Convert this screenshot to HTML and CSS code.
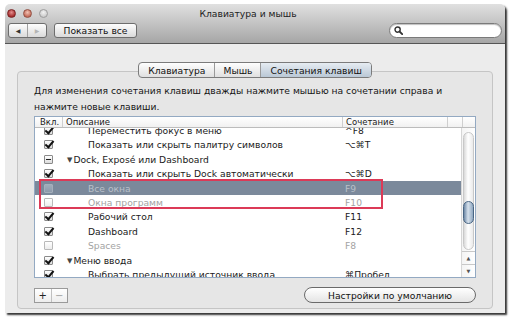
FILE: index.html
```html
<!DOCTYPE html>
<html lang="ru">

<head>
    <meta charset="UTF-8">
    <title>Клавиатура и мышь</title>
    <link rel="stylesheet" href="styles.css">
</head>

<body>
    <div class="window">
        <!-- Title bar + toolbar -->
        <div class="toolbar">
            <div class="titlebar">
                <div class="lights">
                    <span class="light close"></span>
                    <span class="light mini"></span>
                    <span class="light zoom"></span>
                </div>
                <div class="title">Клавиатура и мышь</div>
            </div>
            <div class="tools">
                <div class="nav">
                    <span class="nav-btn">&#9664;</span>
                    <span class="nav-btn off">&#9654;</span>
                </div>
                <span class="show-all">Показать все</span>
                <div class="search">
                    <svg width="9" height="9" viewBox="0 0 9 9">
                        <circle cx="3.6" cy="3.6" r="2.6" fill="none" stroke="#333" stroke-width="1.4" />
                        <line x1="5.5" y1="5.5" x2="8.2" y2="8.2" stroke="#333" stroke-width="1.8" stroke-linecap="round" />
                    </svg>
                </div>
            </div>
        </div>

        <!-- Pane content -->
        <div class="content">
            <div class="tabs">
                <span class="tab">Клавиатура</span>
                <span class="tab">Мышь</span>
                <span class="tab active">Сочетания клавиш</span>
            </div>
            <div class="tabbox">
                <p class="hint">Для изменения сочетания клавиш дважды нажмите мышью на сочетании справа и нажмите новые клавиши.</p>

                <div class="table">
                    <div class="list-head">
                        <span class="hc first">Вкл.</span>
                        <span class="hc">Описание</span>
                        <span class="hc">Сочетание</span>
                        <span class="hc"></span>
                        <span class="hc last"></span>
                    </div>
                    <div class="list-body">
                        <div class="rows">
                            <div class="row">
                                <span class="cell-check"><span class="cb on"></span></span>
                                <span class="desc child">Переместить фокус в меню</span>
                                <span class="keys">^F8</span>
                            </div>
                            <div class="row">
                                <span class="cell-check"><span class="cb on"></span></span>
                                <span class="desc child">Показать или скрыть палитру символов</span>
                                <span class="keys">&#8997;&#8984;T</span>
                            </div>
                            <div class="row">
                                <span class="cell-check"><span class="cb mixed"></span></span>
                                <span class="desc group"><i class="tri">&#9660;</i>Dock, Exposé или Dashboard</span>
                                <span class="keys"></span>
                            </div>
                            <div class="row">
                                <span class="cell-check"><span class="cb on"></span></span>
                                <span class="desc child">Показать или скрыть Dock автоматически</span>
                                <span class="keys">&#8997;&#8984;D</span>
                            </div>
                            <div class="row selected off">
                                <span class="cell-check"><span class="cb"></span></span>
                                <span class="desc child">Все окна</span>
                                <span class="keys">F9</span>
                            </div>
                            <div class="row off">
                                <span class="cell-check"><span class="cb"></span></span>
                                <span class="desc child">Окна программ</span>
                                <span class="keys">F10</span>
                            </div>
                            <div class="row">
                                <span class="cell-check"><span class="cb on"></span></span>
                                <span class="desc child">Рабочий стол</span>
                                <span class="keys">F11</span>
                            </div>
                            <div class="row">
                                <span class="cell-check"><span class="cb on"></span></span>
                                <span class="desc child">Dashboard</span>
                                <span class="keys">F12</span>
                            </div>
                            <div class="row off">
                                <span class="cell-check"><span class="cb"></span></span>
                                <span class="desc child">Spaces</span>
                                <span class="keys">F8</span>
                            </div>
                            <div class="row">
                                <span class="cell-check"><span class="cb on"></span></span>
                                <span class="desc group"><i class="tri">&#9660;</i>Меню ввода</span>
                                <span class="keys"></span>
                            </div>
                            <div class="row">
                                <span class="cell-check"><span class="cb on"></span></span>
                                <span class="desc child">Выбрать предыдущий источник ввода</span>
                                <span class="keys">&#8984;Пробел</span>
                            </div>

                            <!-- red annotation frame over the two disabled rows -->
                            <div class="highlight"></div>
                        </div>
                        <div class="scrollbar">
                            <div class="track">
                                <div class="thumb"></div>
                            </div>
                            <div class="arrow up">&#9650;</div>
                            <div class="arrow down">&#9660;</div>
                        </div>
                    </div>
                </div>

                <div class="footer">
                    <div class="plusminus">
                        <span class="pm">+</span>
                        <span class="pm off">&minus;</span>
                    </div>
                    <span class="defaults">Настройки по умолчанию</span>
                </div>
            </div>
        </div>
    </div>
</body>

</html>
```

FILE: styles.css
```css
body {
    margin: 0;
    padding: 0;
    width: 514px;
    height: 325px;
    background: #ffffff;
    font-family: 'DejaVu Sans', 'Liberation Sans', sans-serif;
    font-size: 9.2px;
    color: #1a1a1a;
    overflow: hidden;
}

.window {
    margin: 4px 0 0 5px;
    width: 500px;
    height: 309px;
    display: flex;
    flex-direction: column;
    border-radius: 5px 5px 0 0;
    box-shadow: 2px 2px 2px rgba(0, 0, 0, 0.8);
}

/* Toolbar */
.toolbar {
    height: 39px;
    background: linear-gradient(#e0e0e0, #a6a6a6);
    border-bottom: 1px solid #555;
    border-radius: 5px 5px 0 0;
    display: flex;
    flex-direction: column;
}

.titlebar {
    height: 17px;
    display: flex;
    align-items: center;
}

.lights {
    display: flex;
    gap: 7px;
    padding: 1px 0 0 2px;
}

.light {
    width: 9px;
    height: 9px;
    border-radius: 50%;
    box-sizing: border-box;
}

.close {
    background: radial-gradient(circle at 50% 35%, #e48d8d, #a52c2c 70%);
    border: 1px solid #7a2323;
}

.mini {
    background: radial-gradient(circle at 50% 35%, #f1c2b4, #c56c5a 70%);
    border: 1px solid #935043;
}

.zoom {
    background: radial-gradient(circle at 50% 35%, #f2f2f2, #cdcdcd 70%);
    border: 1px solid #9c9c9c;
}

.title {
    flex: 1;
    text-align: center;
    margin-left: -57px;
    padding-top: 1px;
    color: #222;
}

.tools {
    display: flex;
    align-items: center;
    padding: 1px 3px 0 3px;
    height: 16px;
}

.nav {
    display: flex;
    width: 39px;
    height: 15px;
    border: 1px solid #6d6d6d;
    border-radius: 3px;
    box-sizing: border-box;
    background: linear-gradient(#fdfdfd, #dadada);
    overflow: hidden;
}

.nav-btn {
    flex: 1;
    font-size: 6px;
    color: #333;
    display: flex;
    align-items: center;
    justify-content: center;
}

.nav-btn + .nav-btn {
    border-left: 1px solid #a0a0a0;
}

.nav-btn.off {
    color: #b5b5b5;
}

.show-all {
    margin-left: 7px;
    width: 83px;
    height: 15px;
    box-sizing: border-box;
    border: 1px solid #6d6d6d;
    border-radius: 3px;
    background: linear-gradient(#fdfdfd, #dadada);
    display: flex;
    align-items: center;
    justify-content: center;
    color: #111;
}

.search {
    margin-left: auto;
    width: 113px;
    height: 15px;
    box-sizing: border-box;
    border: 1px solid #7a7a7a;
    border-radius: 8px;
    background: #fff;
    box-shadow: inset 0 1px 1px rgba(0, 0, 0, 0.25);
    display: flex;
    align-items: center;
    padding-left: 4px;
}

/* Pane */
.content {
    flex: 1;
    background: #ececec;
    display: flex;
    flex-direction: column;
    align-items: center;
    padding-top: 18px;
}

.tabs {
    display: flex;
    height: 16px;
    margin-bottom: -7px;
    border: 1px solid #7b7b7b;
    border-radius: 4px;
    box-sizing: border-box;
    background: linear-gradient(#fefefe, #e0e0e0);
    overflow: hidden;
    position: relative;
    z-index: 1;
}

.tab {
    display: flex;
    align-items: center;
    padding: 0 8px;
    color: #111;
}

.tab:first-child {
    padding: 0 9px;
}

.tab + .tab {
    border-left: 1px solid #9a9a9a;
}

.tab.active {
    background: linear-gradient(#e6ecf2, #bac8d6);
    padding: 0 9px;
}

.tabbox {
    width: 476px;
    flex: 1;
    margin-bottom: 4px;
    box-sizing: border-box;
    border: 1px solid #c5c5c5;
    border-radius: 4px;
    background: #e6e6e6;
    padding: 11px 16px 0 16px;
    display: flex;
    flex-direction: column;
}

.hint {
    margin: 0;
    line-height: 16px;
    color: #151515;
    height: 33px;
}

.table {
    height: 162px;
    border: 1px solid #93a9c2;
    box-sizing: border-box;
    background: #fff;
    display: flex;
    flex-direction: column;
}

.list-head {
    display: grid;
    grid-template-columns: 27px 280px 105px 15px 1fr;
    height: 11px;
    box-sizing: border-box;
    border-bottom: 1px solid #bcbcbc;
    background: linear-gradient(#ffffff, #f1f1f1);
    font-size: 8.5px;
    line-height: 10px;
}

.hc {
    border-left: 1px solid #cfcfcf;
    padding-left: 3px;
    overflow: hidden;
    white-space: nowrap;
}

.hc.first {
    border-left: none;
    padding-left: 5px;
}

.list-body {
    flex: 1;
    display: flex;
    overflow: hidden;
}

.rows {
    flex: 1;
    margin-top: -4.6px;
    position: relative;
}

.row {
    display: grid;
    grid-template-columns: 27px 280px 1fr;
    height: 14.4px;
    align-items: center;
    white-space: nowrap;
}

.row.selected {
    background: #7b899b;
}

.row.off .desc,
.row.off .keys {
    color: #a3a3a3;
}

.row.selected .desc,
.row.selected .keys {
    color: #b9c0c9;
}

.cell-check {
    display: flex;
    justify-content: center;
}

.cb {
    width: 9px;
    height: 9px;
    box-sizing: border-box;
    border: 1px solid #8a8a8a;
    border-radius: 1px;
    background: linear-gradient(#ffffff, #dcdcdc);
    position: relative;
}

.row.off .cb {
    border-color: #b9b9b9;
    background: linear-gradient(#ffffff, #ececec);
}

.row.selected .cb {
    border-color: #a5afbb;
    background: linear-gradient(#a0acba, #8d9aab);
}

.cb.on::after {
    content: "";
    position: absolute;
    left: 2px;
    top: -2px;
    width: 3px;
    height: 7px;
    border: solid #111;
    border-width: 0 2px 2px 0;
    transform: rotate(40deg);
}

.cb.mixed::after {
    content: "";
    position: absolute;
    left: 1px;
    top: 3px;
    width: 5px;
    height: 1.5px;
    background: #222;
}

.desc {
    overflow: hidden;
}

.desc.child {
    padding-left: 26px;
}

.desc.group {
    padding-left: 5px;
}

.tri {
    font-style: normal;
    font-size: 7px;
    color: #444;
    margin-right: 1px;
    vertical-align: 1px;
}

.keys {
    padding-left: 3px;
}

/* annotation frame, over the rows */
.highlight {
    position: absolute;
    left: 4px;
    top: 55.6px;
    width: 344px;
    height: 30px;
    box-sizing: border-box;
    border: 2px solid #dc3a57;
    z-index: 2;
}

/* Scroller */
.scrollbar {
    width: 13px;
    border-left: 1px solid #d6d6d6;
    background: linear-gradient(90deg, #f4f4f4, #ffffff);
    display: flex;
    flex-direction: column;
    padding-top: 4px;
}

.track {
    flex: 1;
    margin: 0 1px;
    border: 1px solid #c8c8c8;
    border-radius: 6px;
    background: linear-gradient(90deg, #d9d9d9, #ffffff 45%, #eaeaea);
    position: relative;
    margin-bottom: 1px;
}

.thumb {
    position: absolute;
    left: -1px;
    right: -1px;
    top: 68px;
    height: 21px;
    border: 1px solid #4a6684;
    border-radius: 6px;
    background: linear-gradient(90deg, #6d88a6, #d6e1ec 45%, #8ea6bf);
}

.arrow {
    height: 12px;
    border-top: 1px solid #c8c8c8;
    font-size: 5px;
    color: #555;
    display: flex;
    align-items: center;
    justify-content: center;
}

/* Footer */
.footer {
    display: flex;
    align-items: center;
    justify-content: space-between;
    margin-top: 9px;
}

.plusminus {
    display: flex;
    width: 34px;
    height: 15px;
    box-sizing: border-box;
    border: 1px solid #9a9a9a;
    background: linear-gradient(#ffffff, #ededed);
}

.pm {
    flex: 1;
    display: flex;
    align-items: center;
    justify-content: center;
    font-size: 10px;
    color: #222;
}

.pm + .pm {
    border-left: 1px solid #c0c0c0;
}

.pm.off {
    color: #a0a0a0;
}

.defaults {
    width: 172px;
    height: 16px;
    box-sizing: border-box;
    border: 1px solid #6a6a6a;
    border-radius: 8px;
    background: linear-gradient(#ffffff, #e4e4e4);
    display: flex;
    align-items: center;
    justify-content: center;
    color: #111;
}
```
